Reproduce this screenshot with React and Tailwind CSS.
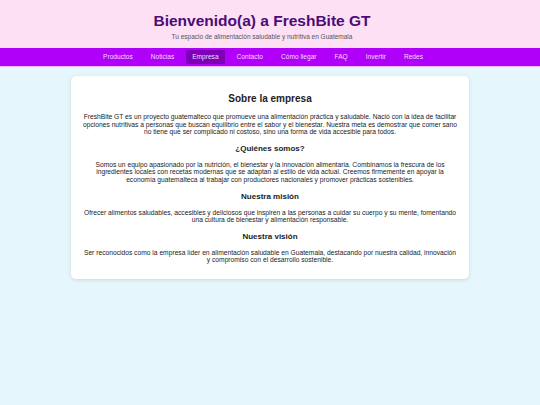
import React from 'react';

const enlaces = ['Productos', 'Noticias', 'Empresa', 'Contacto', 'Cómo llegar', 'FAQ', 'Invertir', 'Redes'];

const App = () => {
  return (
    <div className="min-h-[405px] bg-[#e6f6fd] text-[#222]" style={{ fontFamily: '"Liberation Sans", Arial, sans-serif' }}>
      {/* Encabezado */}
      <header className="bg-[#fde0f4] pt-[11px] pb-[7px] pr-[16px] text-center">
        <h1 className="text-[15.5px] leading-[20px] font-bold text-[#4b0b78]">Bienvenido(a) a FreshBite GT</h1>
        <p className="mt-[2px] text-[6.5px] leading-[8px] text-[#555]">Tu espacio de alimentación saludable y nutritiva en Guatemala</p>
      </header>

      {/* Menu */}
      <nav className="bg-[#b000fa] border-b border-[#f0b8ff] flex justify-center gap-[6px] py-[2px] pr-[14px]">
        {enlaces.map((enlace, i) => (
          <a
            key={i}
            href="#"
            className={`px-[6px] py-[3px] text-[6.6px] leading-[8px] text-[#f7dcff] ${enlace === 'Empresa' ? 'bg-[#7e00b6]' : ''}`}
          >
            {enlace}
          </a>
        ))}
      </nav>

      {/* Contenido */}
      <main className="px-[71px] pt-[9px]">
        <section className="bg-white rounded-[5px] shadow-[0_1px_4px_rgba(0,0,0,0.12)] px-[11px] pt-[16px] pb-[15px] text-center">
          <h2 className="text-[10px] leading-[14px] font-bold text-[#222]">Sobre la empresa</h2>
          <p className="mt-[7px] text-[6.7px] leading-[7.6px]">
            FreshBite GT es un proyecto guatemalteco que promueve una alimentación práctica y saludable. Nació con la idea de facilitar opciones nutritivas a personas que buscan equilibrio entre el sabor y el bienestar. Nuestra meta es demostrar que comer sano no tiene que ser complicado ni costoso, sino una forma de vida accesible para todos.
          </p>

          <h3 className="mt-[7px] text-[8px] leading-[12px] font-bold">¿Quiénes somos?</h3>
          <p className="mt-[6px] text-[6.7px] leading-[7.6px]">
            Somos un equipo apasionado por la nutrición, el bienestar y la innovación alimentaria. Combinamos la frescura de los ingredientes locales con recetas modernas que se adaptan al estilo de vida actual. Creemos firmemente en apoyar la economía guatemalteca al trabajar con productores nacionales y promover prácticas sostenibles.
          </p>

          <h3 className="mt-[7px] text-[8px] leading-[12px] font-bold">Nuestra misión</h3>
          <p className="mt-[6px] text-[6.7px] leading-[7.6px]">
            Ofrecer alimentos saludables, accesibles y deliciosos que inspiren a las personas a cuidar su cuerpo y su mente, fomentando una cultura de bienestar y alimentación responsable.
          </p>

          <h3 className="mt-[7px] text-[8px] leading-[12px] font-bold">Nuestra visión</h3>
          <p className="mt-[6px] text-[6.7px] leading-[7.6px]">
            Ser reconocidos como la empresa líder en alimentación saludable en Guatemala, destacando por nuestra calidad, innovación y compromiso con el desarrollo sostenible.
          </p>
        </section>
      </main>
    </div>
  );
};

export default App;
